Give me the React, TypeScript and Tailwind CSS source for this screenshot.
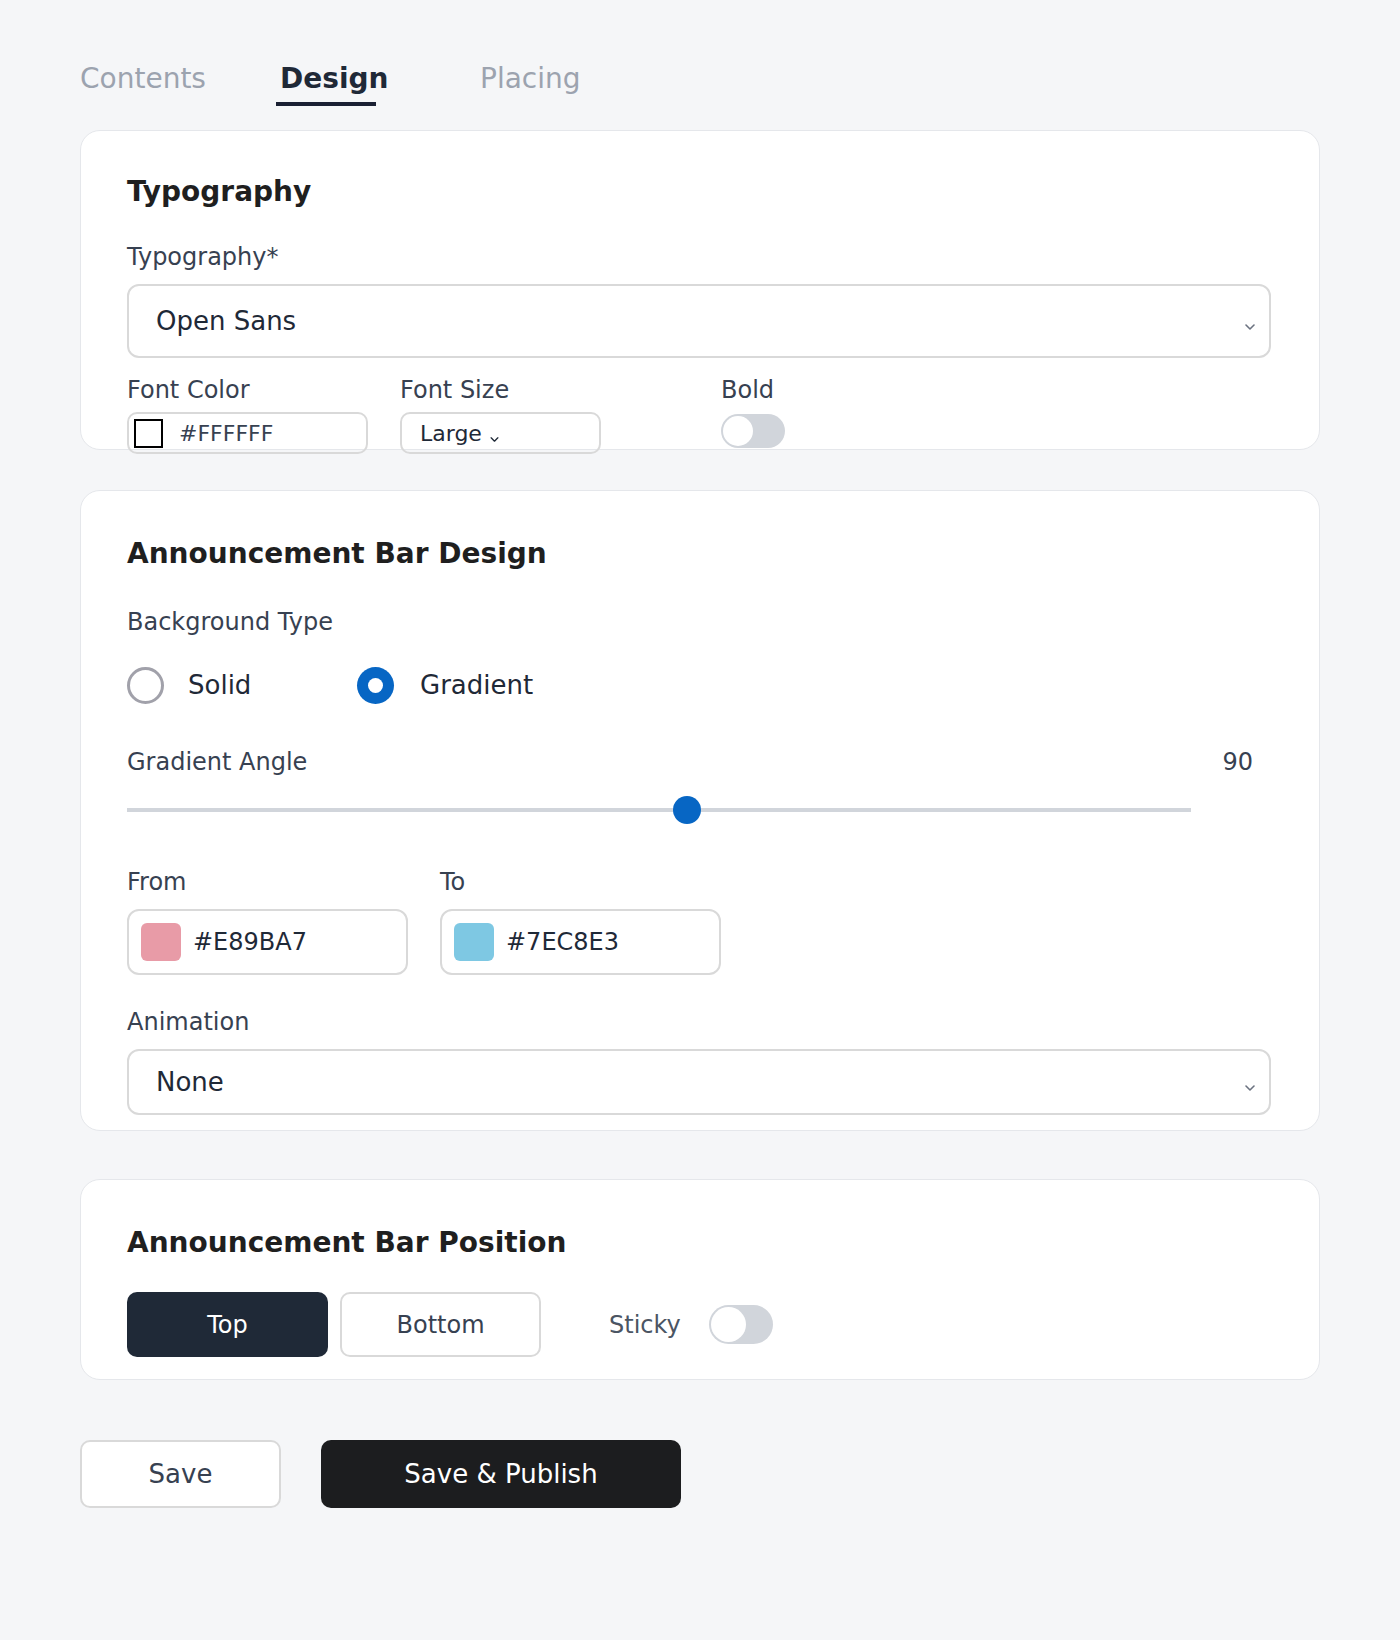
import React from "react";

const font = { fontFamily: '"DejaVu Sans", "Noto Sans", sans-serif' };

const Chevron = ({ className }: { className?: string }) => (
  <svg viewBox="0 0 10 6" className={className} fill="none">
    <path d="M1 1l4 4 4-4" stroke="currentColor" strokeWidth="1.6" strokeLinecap="round" strokeLinejoin="round" />
  </svg>
);

const Toggle = ({ className = "" }: { className?: string }) => (
  <div className={`relative w-16 rounded-full bg-[#d1d5db] ${className}`}>
    <div className="absolute left-[2px] top-[2px] bottom-[2px] aspect-square rounded-full bg-white" />
  </div>
);

const Card = ({ className = "", children }: { className?: string; children: React.ReactNode }) => (
  <div className={`rounded-[20px] border border-[#e5e7eb] bg-white pl-[46px] pr-[48px] ${className}`}>{children}</div>
);

const Heading = ({ children }: { children: React.ReactNode }) => (
  <h2 className="text-[28px] leading-[34px] font-bold text-[#1f1f1f]">{children}</h2>
);

const Label = ({ children, className = "" }: { children: React.ReactNode; className?: string }) => (
  <div className={`text-[24px] leading-[29px] text-[#374151] ${className}`}>{children}</div>
);

const ColorField = ({ color, value }: { color: string; value: string }) => (
  <div className="flex h-[66px] w-[281px] items-center gap-3 rounded-xl border-2 border-[#d9d9d9] px-3">
    <div className="h-[38px] w-[40px] rounded-md" style={{ backgroundColor: color }} />
    <span className="text-[24px] text-[#1f2937]">{value}</span>
  </div>
);

export default function App() {
  return (
    <div className="min-h-screen bg-[#f5f6f8]" style={font}>
      <div className="ml-[80px] w-[1240px] pt-[62px] pb-[130px]">
        {/* Tabs */}
        <div className="flex">
          <div className="w-[200px] text-[28px] leading-[34px] text-[#9ca3af]">Contents</div>
          <div className="w-[200px]">
            <div className="text-[28px] leading-[34px] font-bold text-[#1f2937]">Design</div>
            <div className="-ml-1 mt-[6px] h-1 w-[100px] bg-[#1a2033]" />
          </div>
          <div className="w-[200px] text-[28px] leading-[34px] text-[#9ca3af]">Placing</div>
        </div>

        {/* Typography */}
        <Card className="mt-[24px] h-[320px] pt-[44px]">
          <Heading>Typography</Heading>
          <Label className="mt-[34px]">Typography*</Label>
          <div className="mt-[12px] flex h-[74px] items-center justify-between rounded-xl border-2 border-[#d9d9d9] pl-[27px] pr-[14px]">
            <span className="text-[26px] text-[#1f2937]">Open Sans</span>
            <Chevron className="mt-3 h-[6px] w-[10px] text-[#6b7280]" />
          </div>
          <div className="mt-[18px] flex">
            <div className="w-[241px]">
              <Label>Font Color</Label>
              <div className="mt-[7px] flex h-[42px] items-center gap-4 rounded-[10px] border-2 border-[#d9d9d9] px-[5px]">
                <div className="h-[29px] w-[29px] border-2 border-black bg-white" />
                <span className="text-[22px] text-[#374151]">#FFFFFF</span>
              </div>
            </div>
            <div className="ml-[32px] w-[201px]">
              <Label>Font Size</Label>
              <div className="mt-[7px] flex h-[42px] items-center gap-2 rounded-[10px] border-2 border-[#d9d9d9] px-[18px]">
                <span className="text-[22px] text-[#1f2937]">Large</span>
                <Chevron className="mt-3 h-[5px] w-[9px] text-[#1f2937]" />
              </div>
            </div>
            <div className="ml-[120px]">
              <Label>Bold</Label>
              <Toggle className="mt-[9px] h-[34px]" />
            </div>
          </div>
        </Card>

        {/* Announcement Bar Design */}
        <Card className="mt-[40px] h-[641px] pt-[46px]">
          <Heading>Announcement Bar Design</Heading>
          <Label className="mt-[37px]">Background Type</Label>
          <div className="mt-[29px] flex h-[38px] items-center">
            <div className="flex w-[230px] items-center gap-6">
              <div className="h-[37px] w-[37px] rounded-full border-[3px] border-[#a1a1aa]" />
              <span className="text-[26px] text-[#1f2937]">Solid</span>
            </div>
            <div className="flex items-center gap-[26px]">
              <div className="flex h-[37px] w-[37px] items-center justify-center rounded-full bg-[#0766c4]">
                <div className="h-[15px] w-[15px] rounded-full bg-white" />
              </div>
              <span className="text-[26px] text-[#1f2937]">Gradient</span>
            </div>
          </div>
          <div className="mt-[44px] flex items-center justify-between pr-[18px]">
            <Label>Gradient Angle</Label>
            <span className="text-[24px] leading-[29px] text-[#374151]">90</span>
          </div>
          <div className="relative mt-[19px] h-[28px] w-[1064px]">
            <div className="absolute left-0 right-0 top-[12px] h-1 bg-[#d1d5db]" />
            <div className="absolute left-[546px] top-0 h-[28px] w-[28px] rounded-full bg-[#0766c4]" />
          </div>
          <div className="mt-[44px] flex gap-8">
            <div>
              <Label>From</Label>
              <div className="mt-[12px]">
                <ColorField color="#E89BA7" value="#E89BA7" />
              </div>
            </div>
            <div>
              <Label>To</Label>
              <div className="mt-[12px]">
                <ColorField color="#7EC8E3" value="#7EC8E3" />
              </div>
            </div>
          </div>
          <Label className="mt-[33px]">Animation</Label>
          <div className="mt-[12px] flex h-[66px] items-center justify-between rounded-xl border-2 border-[#d9d9d9] pl-[27px] pr-[14px]">
            <span className="text-[26px] text-[#1f2937]">None</span>
            <Chevron className="mt-3 h-[6px] w-[10px] text-[#6b7280]" />
          </div>
        </Card>

        {/* Announcement Bar Position */}
        <Card className="mt-[48px] h-[201px] pt-[46px]">
          <Heading>Announcement Bar Position</Heading>
          <div className="mt-[32px] flex items-center">
            <button className="h-[65px] w-[201px] rounded-[10px] bg-[#1f2937] text-[24px] text-white">Top</button>
            <button className="ml-3 h-[65px] w-[201px] rounded-[10px] border-2 border-[#d9d9d9] bg-white text-[24px] text-[#374151]">
              Bottom
            </button>
            <span className="ml-[68px] text-[24px] text-[#4b5563]">Sticky</span>
            <Toggle className="ml-[28px] h-[39px]" />
          </div>
        </Card>

        {/* Actions */}
        <div className="mt-[60px] flex gap-10">
          <button className="h-[68px] w-[201px] rounded-[10px] border-2 border-[#d9d9d9] bg-white text-[26px] text-[#374151]">
            Save
          </button>
          <button className="h-[68px] w-[360px] rounded-[10px] bg-[#1c1d1f] text-[26px] text-white">Save &amp; Publish</button>
        </div>
      </div>
    </div>
  );
}
